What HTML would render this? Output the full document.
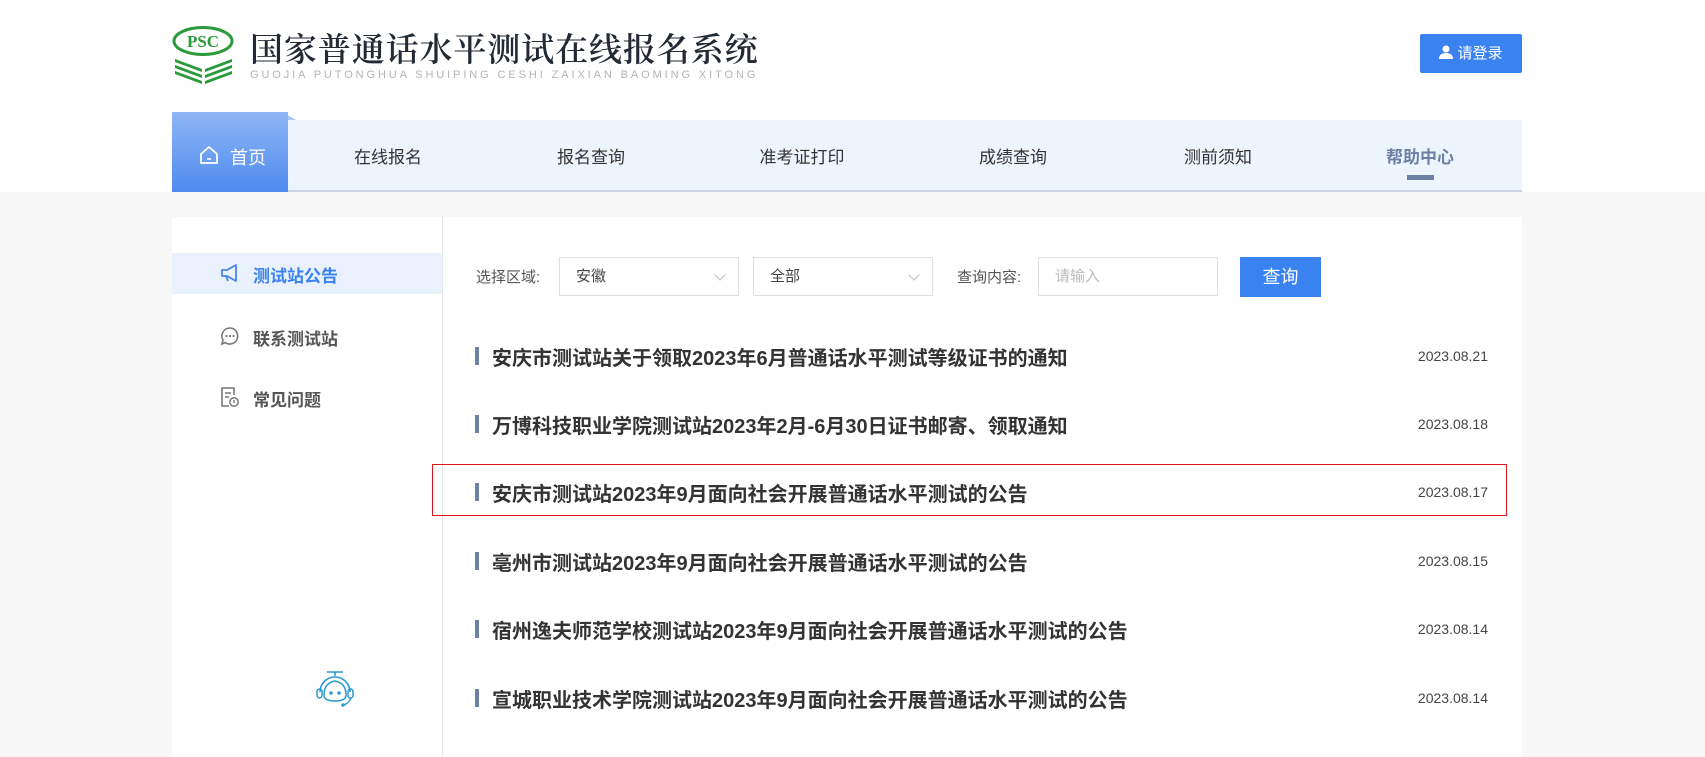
<!DOCTYPE html>
<html><head><meta charset="utf-8"><style>
*{margin:0;padding:0;box-sizing:border-box}
body{width:1705px;height:749px;overflow:hidden;background:#f7f7f7;font-family:"Liberation Sans","Noto Sans CJK SC",sans-serif;position:relative}
.top{position:absolute;left:0;top:0;width:1705px;height:192px;background:#fff}
.abs{position:absolute}
.title{left:250px;top:30px;font-size:33px;letter-spacing:0.9px;color:#222a36;white-space:nowrap;font-family:"Noto Serif CJK SC","Noto Sans CJK SC",serif;font-weight:600;line-height:36px}
.sub{left:250px;top:69px;font-size:11px;letter-spacing:2.9px;color:#b0b4b8;white-space:nowrap}
.login{left:1420px;top:34px;width:102px;height:39px;background:#3a82f0;border-radius:2px;color:#fff;font-size:15px;line-height:39px;text-align:center}
.nav{left:172px;top:120px;width:1350px;height:72px;background:#ecf4fd;border-bottom:2px solid #c8d4e4}
.home{left:172px;top:112px;width:116px;height:80px;background:linear-gradient(#8fb6f6,#4f8bee);color:#fff;font-size:18px}
.ni{position:absolute;top:143px;font-size:17px;color:#333;transform:translateX(-50%);white-space:nowrap}
.card{left:172px;top:217px;width:1350px;height:540px;background:#fff}
.side{left:442px;top:217px;width:1px;height:540px;background:#e6e6e6}
.sact{left:172px;top:253px;width:270px;height:41px;background:#e8f1fc}
.si{position:absolute;left:253px;font-size:17px;font-weight:bold;color:#555}
.sel{position:absolute;top:257px;height:39px;border:1px solid #dcdfe6;font-size:15px;color:#444;line-height:37px;padding-left:16px}
.sel i{position:absolute;right:14px;top:13px;width:8px;height:8px;border-right:1px solid #bbb;border-bottom:1px solid #bbb;transform:rotate(45deg)}
.lbl{position:absolute;top:266px;font-size:15px;color:#555}
.row{position:absolute;left:475px;width:1020px;height:30px}
.row b{position:absolute;left:0;top:6px;width:4px;height:18px;background:#6d80a6}
.row span{position:absolute;left:17px;top:1px;font-size:20px;font-weight:bold;color:#333;white-space:nowrap}
.row em{position:absolute;right:7px;top:7px;font-style:normal;font-size:14px;color:#444}
</style></head><body>
<div class="top"></div>
<svg class="abs" style="left:172px;top:25px" width="64" height="60" viewBox="0 0 64 60">
<ellipse cx="31" cy="16" rx="29" ry="13.5" fill="none" stroke="#2a9a3a" stroke-width="3"/>
<text x="31" y="22" text-anchor="middle" font-family="Liberation Serif,serif" font-weight="bold" font-size="17" fill="#2a9a3a">PSC</text>
<g fill="#2a9a3a">
<path d="M3 34 L30 44 L30 47 L3 37Z M3 40 L30 50 L30 53 L3 43Z M3 46 L30 56 L30 59 L3 49Z"/>
<path d="M60 34 L33 44 L33 47 L60 37Z M60 40 L33 50 L33 53 L60 43Z M60 46 L33 56 L33 59 L60 49Z"/>
</g></svg>
<div class="abs title">国家普通话水平测试在线报名系统</div>
<div class="abs sub">GUOJIA PUTONGHUA SHUIPING CESHI ZAIXIAN BAOMING XITONG</div>
<div class="abs login"><svg width="14" height="14" viewBox="0 0 14 14" style="vertical-align:-1px;margin-right:4px"><circle cx="7" cy="4" r="3.5" fill="#fff"/><path d="M0 14 Q0 8 7 8 Q14 8 14 14Z" fill="#fff"/></svg>请登录</div>
<div class="abs nav"></div>
<div class="abs" style="left:282px;top:112px;width:0;height:0;border-left:14px solid #a9c6f2;border-top:8px solid transparent"></div>
<div class="abs home"><svg style="position:absolute;left:27px;top:33px" width="20" height="20" viewBox="0 0 20 20"><path d="M2 9 L10 2 L18 9 V18 H2Z" fill="none" stroke="#fff" stroke-width="1.8" stroke-linejoin="round"/><path d="M8 14 H12" stroke="#fff" stroke-width="1.6"/></svg><span style="position:absolute;left:58px;top:32px">首页</span></div>
<div class="ni" style="left:388px">在线报名</div>
<div class="ni" style="left:591px">报名查询</div>
<div class="ni" style="left:802px">准考证打印</div>
<div class="ni" style="left:1013px">成绩查询</div>
<div class="ni" style="left:1218px">测前须知</div>
<div class="ni" style="left:1420px;font-weight:bold;color:#6d80a6">帮助中心</div>
<div class="abs" style="left:1407px;top:175px;width:27px;height:5px;background:#6d80a6"></div>
<div class="abs card"></div>
<div class="abs side"></div>
<div class="abs sact"></div>
<svg class="abs" style="left:220px;top:263px" width="20" height="20" viewBox="0 0 20 20"><path d="M2 7 H7 L16 2 V18 L7 13 H2Z M6 13 L8 18" fill="none" stroke="#4b85e8" stroke-width="1.8" stroke-linejoin="round"/></svg>
<div class="si" style="top:262px;color:#3a82f0">测试站公告</div>
<svg class="abs" style="left:220px;top:326px" width="20" height="20" viewBox="0 0 20 20"><path d="M10 2 A8 8 0 1 1 5 16.5 L2 18 L3 14 A8 8 0 0 1 10 2Z" fill="none" stroke="#777" stroke-width="1.6"/><circle cx="6.5" cy="10" r="1.1" fill="#777"/><circle cx="10" cy="10" r="1.1" fill="#777"/><circle cx="13.5" cy="10" r="1.1" fill="#777"/></svg>
<div class="si" style="top:325px">联系测试站</div>
<svg class="abs" style="left:220px;top:386px" width="20" height="22" viewBox="0 0 20 22"><path d="M14 9 V2 H2 V20 H9" fill="none" stroke="#777" stroke-width="1.6"/><path d="M5 7 H11 M5 11 H9" stroke="#777" stroke-width="1.5"/><circle cx="14" cy="16" r="4.2" fill="none" stroke="#777" stroke-width="1.5"/><path d="M14 14 V17" stroke="#777" stroke-width="1.4"/></svg>
<div class="si" style="top:386px">常见问题</div>
<svg class="abs" style="left:315px;top:670px" width="42" height="40" viewBox="0 0 42 40"><path d="M12 2 H28 M20 2 V6" stroke="#2a9ad2" stroke-width="1.6"/><path d="M5 22 A15 15 0 0 1 35 22" fill="none" stroke="#2a9ad2" stroke-width="1.6"/><path d="M9 25 Q9 13 20 11 Q31 13 31 25 Q31 31 20 31 Q9 31 9 25Z" fill="none" stroke="#2a9ad2" stroke-width="1.5"/><rect x="2" y="19" width="5" height="9" rx="2.5" fill="none" stroke="#2a9ad2" stroke-width="1.5"/><rect x="33" y="19" width="5" height="9" rx="2.5" fill="none" stroke="#2a9ad2" stroke-width="1.5"/><path d="M36 28 Q34 33 29 35" fill="none" stroke="#2a9ad2" stroke-width="1.4"/><circle cx="28" cy="35" r="1.8" fill="#2a9ad2"/><circle cx="16" cy="23" r="1.8" fill="#2a9ad2"/><circle cx="24" cy="23" r="1.8" fill="#2a9ad2"/></svg>
<div class="lbl" style="left:476px">选择区域:</div>
<div class="sel" style="left:559px;width:180px">安徽<i></i></div>
<div class="sel" style="left:753px;width:180px">全部<i></i></div>
<div class="lbl" style="left:957px">查询内容:</div>
<div class="sel" style="left:1038px;width:180px;color:#bbb">请输入</div>
<div class="abs" style="left:1240px;top:257px;width:81px;height:40px;background:#3a82f0;color:#fff;font-size:18px;line-height:40px;text-align:center">查询</div>
<div class="row" style="top:341px"><b></b><span>安庆市测试站关于领取2023年6月普通话水平测试等级证书的通知</span><em>2023.08.21</em></div>
<div class="row" style="top:409px"><b></b><span>万博科技职业学院测试站2023年2月-6月30日证书邮寄、领取通知</span><em>2023.08.18</em></div>
<div class="abs" style="left:432px;top:464px;width:1075px;height:52px;border:1.5px solid #e0141e"></div>
<div class="row" style="top:477px"><b></b><span>安庆市测试站2023年9月面向社会开展普通话水平测试的公告</span><em>2023.08.17</em></div>
<div class="row" style="top:546px"><b></b><span>亳州市测试站2023年9月面向社会开展普通话水平测试的公告</span><em>2023.08.15</em></div>
<div class="row" style="top:614px"><b></b><span>宿州逸夫师范学校测试站2023年9月面向社会开展普通话水平测试的公告</span><em>2023.08.14</em></div>
<div class="row" style="top:683px"><b></b><span>宣城职业技术学院测试站2023年9月面向社会开展普通话水平测试的公告</span><em>2023.08.14</em></div>
</body></html>
